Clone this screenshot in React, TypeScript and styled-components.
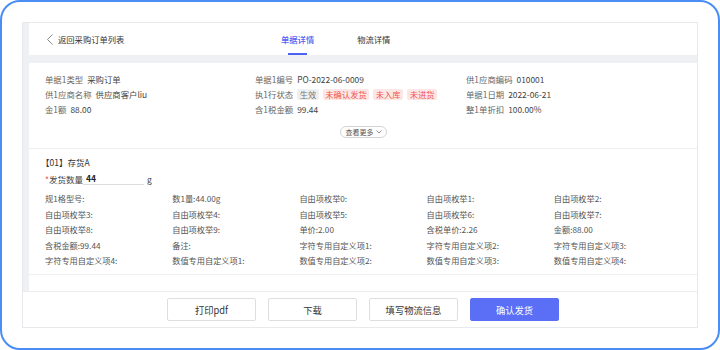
import React from 'react';
import styled, { createGlobalStyle } from 'styled-components';

const BLUE = '#4b63f2';

const INFO_ROWS: { label: string; value?: string; tags?: boolean }[][] = [
  [
    { label: '单据1类型', value: '采购订单' },
    { label: '单据1编号', value: 'PO-2022-06-0009' },
    { label: '供1应商编码', value: '010001' },
  ],
  [
    { label: '供1应商名称', value: '供应商客户liu' },
    { label: '执1行状态', tags: true },
    { label: '单据1日期', value: '2022-06-21' },
  ],
  [
    { label: '金1额', value: '88.00' },
    { label: '含1税金额', value: '99.44' },
    { label: '整1单折扣', value: '100.00%' },
  ],
];

const TAGS = [
  { text: '生效', tone: 'gray' },
  { text: '未确认发货', tone: 'red' },
  { text: '未入库', tone: 'red' },
  { text: '未进货', tone: 'red' },
];

const FIELDS = [
  '规1格型号:', '数1量:44.00g', '自由项枚举0:', '自由项枚举1:', '自由项枚举2:',
  '自由项枚举3:', '自由项枚举4:', '自由项枚举5:', '自由项枚举6:', '自由项枚举7:',
  '自由项枚举8:', '自由项枚举9:', '单价:2.00', '含税单价:2.26', '金额:88.00',
  '含税金额:99.44', '备注:', '字符专用自定义项1:', '字符专用自定义项2:', '字符专用自定义项3:',
  '字符专用自定义项4:', '数值专用自定义项1:', '数值专用自定义项2:', '数值专用自定义项3:', '数值专用自定义项4:',
];

const BUTTONS = [
  { text: '打印pdf', primary: false },
  { text: '下载', primary: false },
  { text: '填写物流信息', primary: false },
  { text: '确认发货', primary: true },
];

const App = (): JSX.Element => {
  return (
    <>
      <GlobalStyle />
      <Frame>
        <Panel>
          <Main>
            <Header>
              <BackLink>
                <svg width="8" height="11" viewBox="0 0 8 11">
                  <polyline points="6.5,0.5 1.5,5.5 6.5,10.5" fill="none" stroke="#888" strokeWidth="1" />
                </svg>
                返回采购订单列表
              </BackLink>
              <Tabs>
                <Tab active>单据详情</Tab>
                <Tab>物流详情</Tab>
              </Tabs>
            </Header>
            <Body>
              <InfoSection>
                <InfoGrid>
                  {INFO_ROWS.flat().map((item) => (
                    <InfoItem key={item.label}>
                      <InfoLabel>{item.label}</InfoLabel>
                      {item.tags ? (
                        <TagList>
                          {TAGS.map((t) => (
                            <Tag key={t.text} tone={t.tone}>
                              {t.text}
                            </Tag>
                          ))}
                        </TagList>
                      ) : (
                        <InfoValue>{item.value}</InfoValue>
                      )}
                    </InfoItem>
                  ))}
                </InfoGrid>
                <MoreRow>
                  <MoreButton>
                    查看更多
                    <svg width="6" height="4" viewBox="0 0 6 4">
                      <polyline points="0.5,0.5 3,3 5.5,0.5" fill="none" stroke="#777" strokeWidth="0.8" />
                    </svg>
                  </MoreButton>
                </MoreRow>
              </InfoSection>
              <ItemSection>
                <ItemTitle>【01】存货A</ItemTitle>
                <QtyRow>
                  <QtyLabel>
                    <Required>*</Required>发货数量
                  </QtyLabel>
                  <QtyInput>44</QtyInput>
                  <Unit>g</Unit>
                </QtyRow>
                <FieldGrid>
                  {FIELDS.map((f) => (
                    <Field key={f}>{f}</Field>
                  ))}
                </FieldGrid>
              </ItemSection>
            </Body>
          </Main>
          <Footer>
            {BUTTONS.map((b) => (
              <ActionButton key={b.text} primary={b.primary}>
                {b.text}
              </ActionButton>
            ))}
          </Footer>
        </Panel>
      </Frame>
    </>
  );
};

const GlobalStyle = createGlobalStyle`
  html, body {
    margin: 0;
    padding: 0;
    background: #ffffff;
  }
  body {
    font-family: "Noto Sans CJK SC", "Noto Sans", sans-serif;
    color: #333;
  }
  * {
    box-sizing: border-box;
  }
`;

const Frame = styled.div`
  width: 720px;
  height: 350px;
  border: 2px solid #4a8ef5;
  border-radius: 20px;
  padding: 20px;
  background: #fff;
`;

const Panel = styled.div`
  display: flex;
  flex-direction: column;
  height: 100%;
  border: 1px solid #e7e9ec;
  background: #fff;
`;

const Main = styled.div`
  flex: 1;
  display: flex;
  flex-direction: column;
  gap: 8px;
  padding-left: 6px;
  background: #eef0f4;
  overflow: hidden;
`;

const Header = styled.div`
  display: flex;
  align-items: center;
  height: 32px;
  flex-shrink: 0;
  padding-left: 17px;
  background: #fff;
`;

const BackLink = styled.div`
  display: flex;
  align-items: center;
  gap: 4px;
  width: 235px;
  font-size: 8.3px;
  color: #333;
`;

const Tabs = styled.div`
  display: flex;
  gap: 43px;
  height: 100%;
`;

const Tab = styled.div<{ active?: boolean }>`
  position: relative;
  display: flex;
  align-items: center;
  font-size: 8.3px;
  color: ${({ active }) => (active ? BLUE : '#333')};
  font-weight: ${({ active }) => (active ? 500 : 400)};

  &::after {
    content: '';
    display: ${({ active }) => (active ? 'block' : 'none')};
    position: absolute;
    bottom: 0;
    left: 50%;
    width: 19px;
    height: 2px;
    margin-left: -10px;
    background: ${BLUE};
  }
`;

const Body = styled.div`
  flex: 1;
  background: #fff;
`;

const InfoSection = styled.div`
  padding: 8.5px 16px 10px;
  border-bottom: 1px solid #eeeff1;
`;

const InfoGrid = styled.div`
  display: grid;
  grid-template-columns: 210px 211px 1fr;
`;

const InfoItem = styled.div`
  display: flex;
  align-items: center;
  gap: 4px;
  height: 15px;
  font-size: 8.4px;
  white-space: nowrap;
`;

const InfoLabel = styled.span`
  color: #666;
`;

const InfoValue = styled.span`
  color: #444;
`;

const TagList = styled.div`
  display: flex;
  gap: 4px;
`;

const Tag = styled.span<{ tone: string }>`
  display: inline-flex;
  align-items: center;
  height: 11px;
  padding: 0 2.5px;
  border-radius: 2px;
  font-size: 8.3px;
  color: ${({ tone }) => (tone === 'red' ? '#f2544e' : '#777')};
  background: ${({ tone }) => (tone === 'red' ? '#fde7e6' : '#efefef')};
`;

const MoreRow = styled.div`
  display: flex;
  justify-content: center;
  margin-top: 9px;
`;

const MoreButton = styled.div`
  display: flex;
  align-items: center;
  gap: 2px;
  height: 12px;
  padding: 0 4px 0 5px;
  border: 1px solid #d4d4d4;
  border-radius: 6px;
  font-size: 7px;
  color: #555;
`;

const ItemSection = styled.div`
  padding: 6.5px 16px 5.5px;
  border-bottom: 1px solid #eeeff1;
`;

const ItemTitle = styled.div`
  height: 15px;
  line-height: 15px;
  font-size: 8.5px;
  color: #333;
  margin-left: -4px;
`;

const QtyRow = styled.div`
  display: flex;
  align-items: center;
  height: 17px;
  font-size: 8.5px;
`;

const QtyLabel = styled.span`
  color: #444;
  width: 38px;
`;

const Required = styled.span`
  color: #f2544e;
`;

const QtyInput = styled.div`
  width: 61px;
  height: 13px;
  padding-left: 3px;
  line-height: 12px;
  font-weight: 700;
  color: #222;
  border-bottom: 1px solid #dcdcdc;
`;

const Unit = styled.span`
  margin-left: 3px;
  color: #444;
`;

const FieldGrid = styled.div`
  display: grid;
  grid-template-columns: repeat(5, 1fr);
  grid-auto-rows: 15.5px;
  margin-top: 3.5px;
`;

const Field = styled.div`
  display: flex;
  align-items: center;
  font-size: 8.2px;
  color: #555;
  white-space: nowrap;
`;

const Footer = styled.div`
  display: flex;
  justify-content: center;
  align-items: center;
  gap: 12px;
  height: 36px;
  flex-shrink: 0;
  padding-left: 6px;
  border-top: 1px solid #ebecee;
  background: #fff;
`;

const ActionButton = styled.div<{ primary: boolean }>`
  display: flex;
  align-items: center;
  justify-content: center;
  width: 89px;
  height: 23px;
  border-radius: 2px;
  font-size: 9.3px;
  border: 1px solid ${({ primary }) => (primary ? '#5a6ef6' : '#dedede')};
  background: ${({ primary }) => (primary ? '#5a6ef6' : '#fff')};
  color: ${({ primary }) => (primary ? '#fff' : '#333')};
`;

export default App;
